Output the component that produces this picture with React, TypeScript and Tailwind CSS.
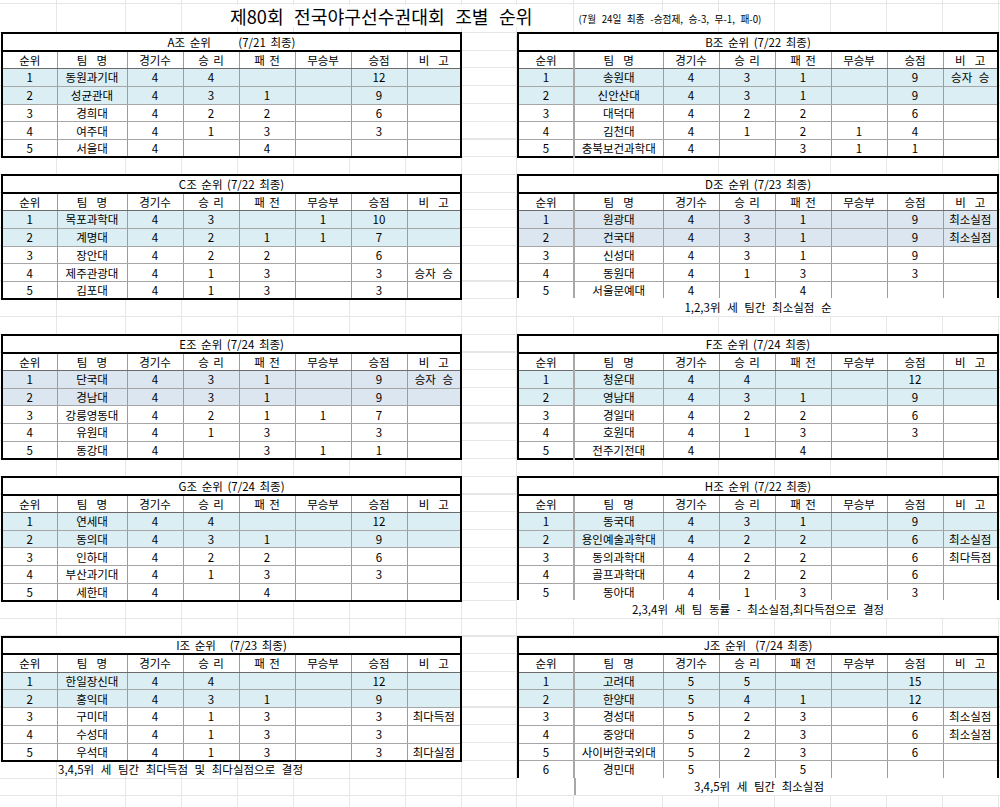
import React from "react";

type Row = string[];
type Group = { title: string; rows: Row[]; hl: "c" | "b" };

const HEAD = ["순위", "팀  명", "경기수", "승 리", "패 전", "무승부", "승점", "비  고"];

const GA: Group = {
  title: "A조 순위      (7/21 최종)",
  hl: "c",
  rows: [
    ["1", "동원과기대", "4", "4", "", "", "12", ""],
    ["2", "성균관대", "4", "3", "1", "", "9", ""],
    ["3", "경희대", "4", "2", "2", "", "6", ""],
    ["4", "여주대", "4", "1", "3", "", "3", ""],
    ["5", "서울대", "4", "", "4", "", "", ""],
  ],
};
const GB: Group = {
  title: "B조 순위 (7/22 최종)",
  hl: "c",
  rows: [
    ["1", "송원대", "4", "3", "1", "", "9", "승자 승"],
    ["2", "신안산대", "4", "3", "1", "", "9", ""],
    ["3", "대덕대", "4", "2", "2", "", "6", ""],
    ["4", "김천대", "4", "1", "2", "1", "4", ""],
    ["5", "충북보건과학대", "4", "", "3", "1", "1", ""],
  ],
};
const GC: Group = {
  title: "C조 순위 (7/22 최종)",
  hl: "c",
  rows: [
    ["1", "목포과학대", "4", "3", "", "1", "10", ""],
    ["2", "계명대", "4", "2", "1", "1", "7", ""],
    ["3", "장안대", "4", "2", "2", "", "6", ""],
    ["4", "제주관광대", "4", "1", "3", "", "3", "승자 승"],
    ["5", "김포대", "4", "1", "3", "", "3", ""],
  ],
};
const GD: Group = {
  title: "D조 순위 (7/23 최종)",
  hl: "b",
  rows: [
    ["1", "원광대", "4", "3", "1", "", "9", "최소실점"],
    ["2", "건국대", "4", "3", "1", "", "9", "최소실점"],
    ["3", "신성대", "4", "3", "1", "", "9", ""],
    ["4", "동원대", "4", "1", "3", "", "3", ""],
    ["5", "서울문예대", "4", "", "4", "", "", ""],
  ],
};
const GE: Group = {
  title: "E조 순위 (7/24 최종)",
  hl: "b",
  rows: [
    ["1", "단국대", "4", "3", "1", "", "9", "승자 승"],
    ["2", "경남대", "4", "3", "1", "", "9", ""],
    ["3", "강릉영동대", "4", "2", "1", "1", "7", ""],
    ["4", "유원대", "4", "1", "3", "", "3", ""],
    ["5", "동강대", "4", "", "3", "1", "1", ""],
  ],
};
const GF: Group = {
  title: "F조 순위 (7/24 최종)",
  hl: "c",
  rows: [
    ["1", "청운대", "4", "4", "", "", "12", ""],
    ["2", "영남대", "4", "3", "1", "", "9", ""],
    ["3", "경일대", "4", "2", "2", "", "6", ""],
    ["4", "호원대", "4", "1", "3", "", "3", ""],
    ["5", "전주기전대", "4", "", "4", "", "", ""],
  ],
};
const GG: Group = {
  title: "G조 순위 (7/24 최종)",
  hl: "c",
  rows: [
    ["1", "연세대", "4", "4", "", "", "12", ""],
    ["2", "동의대", "4", "3", "1", "", "9", ""],
    ["3", "인하대", "4", "2", "2", "", "6", ""],
    ["4", "부산과기대", "4", "1", "3", "", "3", ""],
    ["5", "세한대", "4", "", "4", "", "", ""],
  ],
};
const GH: Group = {
  title: "H조 순위 (7/22 최종)",
  hl: "c",
  rows: [
    ["1", "동국대", "4", "3", "1", "", "9", ""],
    ["2", "용인예술과학대", "4", "2", "2", "", "6", "최소실점"],
    ["3", "동의과학대", "4", "2", "2", "", "6", "최다득점"],
    ["4", "골프과학대", "4", "2", "2", "", "6", ""],
    ["5", "동아대", "4", "1", "3", "", "3", ""],
  ],
};
const GI: Group = {
  title: "I조 순위   (7/23 최종)",
  hl: "c",
  rows: [
    ["1", "한일장신대", "4", "4", "", "", "12", ""],
    ["2", "홍익대", "4", "3", "1", "", "9", ""],
    ["3", "구미대", "4", "1", "3", "", "3", "최다득점"],
    ["4", "수성대", "4", "1", "3", "", "3", ""],
    ["5", "우석대", "4", "1", "3", "", "3", "최다실점"],
  ],
};
const GJ: Group = {
  title: "J조 순위  (7/24 최종)",
  hl: "c",
  rows: [
    ["1", "고려대", "5", "5", "", "", "15", ""],
    ["2", "한양대", "5", "4", "1", "", "12", ""],
    ["3", "경성대", "5", "2", "3", "", "6", "최소실점"],
    ["4", "중앙대", "5", "2", "3", "", "6", "최소실점"],
    ["5", "사이버한국외대", "5", "2", "3", "", "6", ""],
    ["6", "경민대", "5", "", "5", "", "", ""],
  ],
};

function Table({ g, right }: { g: Group; right?: boolean }) {
  const hl = g.hl === "c" ? "bg-[#daeef3]" : "bg-[#dce6f1]";
  return (
    <table
      className={
        right
          ? "table-fixed border-collapse border-2 border-black bg-white w-[482px]"
          : "table-fixed border-collapse border-2 border-black bg-white w-[461px]"
      }
    >
      <colgroup>
        <col className={right ? "w-[56px]" : "w-[55px]"} />
        <col className={right ? "w-[89px]" : "w-[70px]"} />
        <col className="w-[56px]" />
        <col className="w-[56px]" />
        <col className="w-[56px]" />
        <col className="w-[56px]" />
        <col className="w-[56px]" />
        <col className={right ? "w-[55px]" : "w-[54px]"} />
      </colgroup>
      <tbody>
        <tr className="h-[17.75px]">
          <td colSpan={8} className="p-0 text-center whitespace-pre [word-spacing:2px] border-b-2 border-black">
            {g.title}
          </td>
        </tr>
        <tr className="h-[17.75px]">
          {HEAD.map((h, i) => (
            <td
              key={i}
              className={
                i === 0 && right
                  ? "p-0 text-center whitespace-pre [word-spacing:2px] border-r-2 border-b border-r-[#a8a8a8] border-b-[#6b6b6b]"
                  : "p-0 text-center whitespace-pre [word-spacing:2px] border-r border-b border-r-[#9c9c9c] border-b-[#6b6b6b]"
              }
            >
              {h}
            </td>
          ))}
        </tr>
        {g.rows.map((r, ri) => (
          <tr key={ri} className={ri < 2 ? `h-[17.75px] ${hl}` : "h-[17.75px]"}>
            {r.map((c, ci) => (
              <td
                key={ci}
                className={
                  ci === 0 && right
                    ? "p-0 text-center whitespace-nowrap [word-spacing:0.35em] border-r-2 border-b border-r-[#a8a8a8] border-b-[#a6a6a6]"
                    : "p-0 text-center whitespace-nowrap [word-spacing:0.35em] border-r border-b border-r-[#9c9c9c] border-b-[#a6a6a6]"
                }
              >
                {c}
              </td>
            ))}
          </tr>
        ))}
      </tbody>
    </table>
  );
}

function Block({ g, right, rows }: { g: Group; right?: boolean; rows?: number }) {
  return (
    <div className={rows === 8 ? "h-[142px]" : "h-[124.25px]"}>
      <Table g={g} right={right} />
    </div>
  );
}

function Gap1() {
  return <div className="h-[17.75px]" />;
}
function Gap2() {
  return <div className="h-[35.5px]" />;
}

export default function App() {
  return (
    <div className="w-[1000px] h-[807px] overflow-hidden bg-white text-black font-['Noto_Sans_CJK_KR',sans-serif] text-[11.5px] leading-[14px] bg-[image:linear-gradient(to_right,transparent_56px,#e6e6e6_56px_57px,transparent_57px_125px,#e6e6e6_125px_126px,transparent_126px_181px,#e6e6e6_181px_182px,transparent_182px_237px,#e6e6e6_237px_238px,transparent_238px_293px,#e6e6e6_293px_294px,transparent_294px_349px,#e6e6e6_349px_350px,transparent_350px_405px,#e6e6e6_405px_406px,transparent_406px_461px,#e6e6e6_461px_462px,transparent_462px_516px,#e6e6e6_516px_517px,transparent_517px_573px,#e6e6e6_573px_574px,transparent_574px_662px,#e6e6e6_662px_663px,transparent_663px_718px,#e6e6e6_718px_719px,transparent_719px_774px,#e6e6e6_774px_775px,transparent_775px_830px,#e6e6e6_830px_831px,transparent_831px_886px,#e6e6e6_886px_887px,transparent_887px_942px,#e6e6e6_942px_943px,transparent_943px_998px,#e6e6e6_998px_999px,transparent_999px)]">
      {/* header */}
      <div className="h-[32px] flex items-start pl-[230px] bg-[image:linear-gradient(to_bottom,transparent_3px,#e6e6e6_3px_4px,transparent_4px)]">
        <div className="mt-[5px] text-[18.2px] leading-[22px] bg-white whitespace-pre [word-spacing:0.35em]">제80회 전국야구선수권대회 조별 순위</div>
        <div className="ml-[46px] mt-[12px] text-[9.7px] leading-[14px] bg-white whitespace-pre [word-spacing:0.35em]">(7월 24일 최종 -승점제, 승-3, 무-1, 패-0)</div>
      </div>
      {/* body */}
      <div className="h-[775px] flex bg-[image:repeating-linear-gradient(to_bottom,#e6e6e6_0px,#e6e6e6_1px,transparent_1px,transparent_17.75px)]">
        <div className="w-[463px] pl-[1px] flex flex-col">
          <Block g={GA} />
          <Gap1 />
          <Block g={GC} />
          <Gap2 />
          <Block g={GE} />
          <Gap1 />
          <Block g={GG} />
          <Gap2 />
          <Block g={GI} />
          <div className="h-[17.75px] pl-[57px] flex items-center">
            <span className="bg-white whitespace-pre [word-spacing:0.35em]">3,4,5위 세 팀간 최다득점 및 최다실점으로 결정</span>
          </div>
        </div>
        <div className="ml-[54px] w-[483px] flex flex-col">
          <Block g={GB} right />
          <Gap1 />
          <Block g={GD} right />
          <div className="h-[17.75px] w-[482px] flex items-center justify-center bg-white whitespace-pre [word-spacing:0.35em]">1,2,3위 세 팀간 최소실점 순</div>
          <Gap1 />
          <Block g={GF} right />
          <Gap1 />
          <Block g={GH} right />
          <div className="h-[17.75px] w-[482px] flex items-center justify-center bg-white whitespace-pre [word-spacing:0.35em]">2,3,4위 세 팀 동률 - 최소실점,최다득점으로 결정</div>
          <Gap1 />
          <Block g={GJ} right rows={8} />
          <div className="h-[17.75px] w-[482px] flex bg-white">
            <div className="w-[57px]" />
            <div className="flex-1 border-l-2 border-[#a8a8a8] pr-[57px] flex items-center justify-center whitespace-pre [word-spacing:0.35em]">3,4,5위 세 팀간 최소실점</div>
          </div>
        </div>
      </div>
    </div>
  );
}
